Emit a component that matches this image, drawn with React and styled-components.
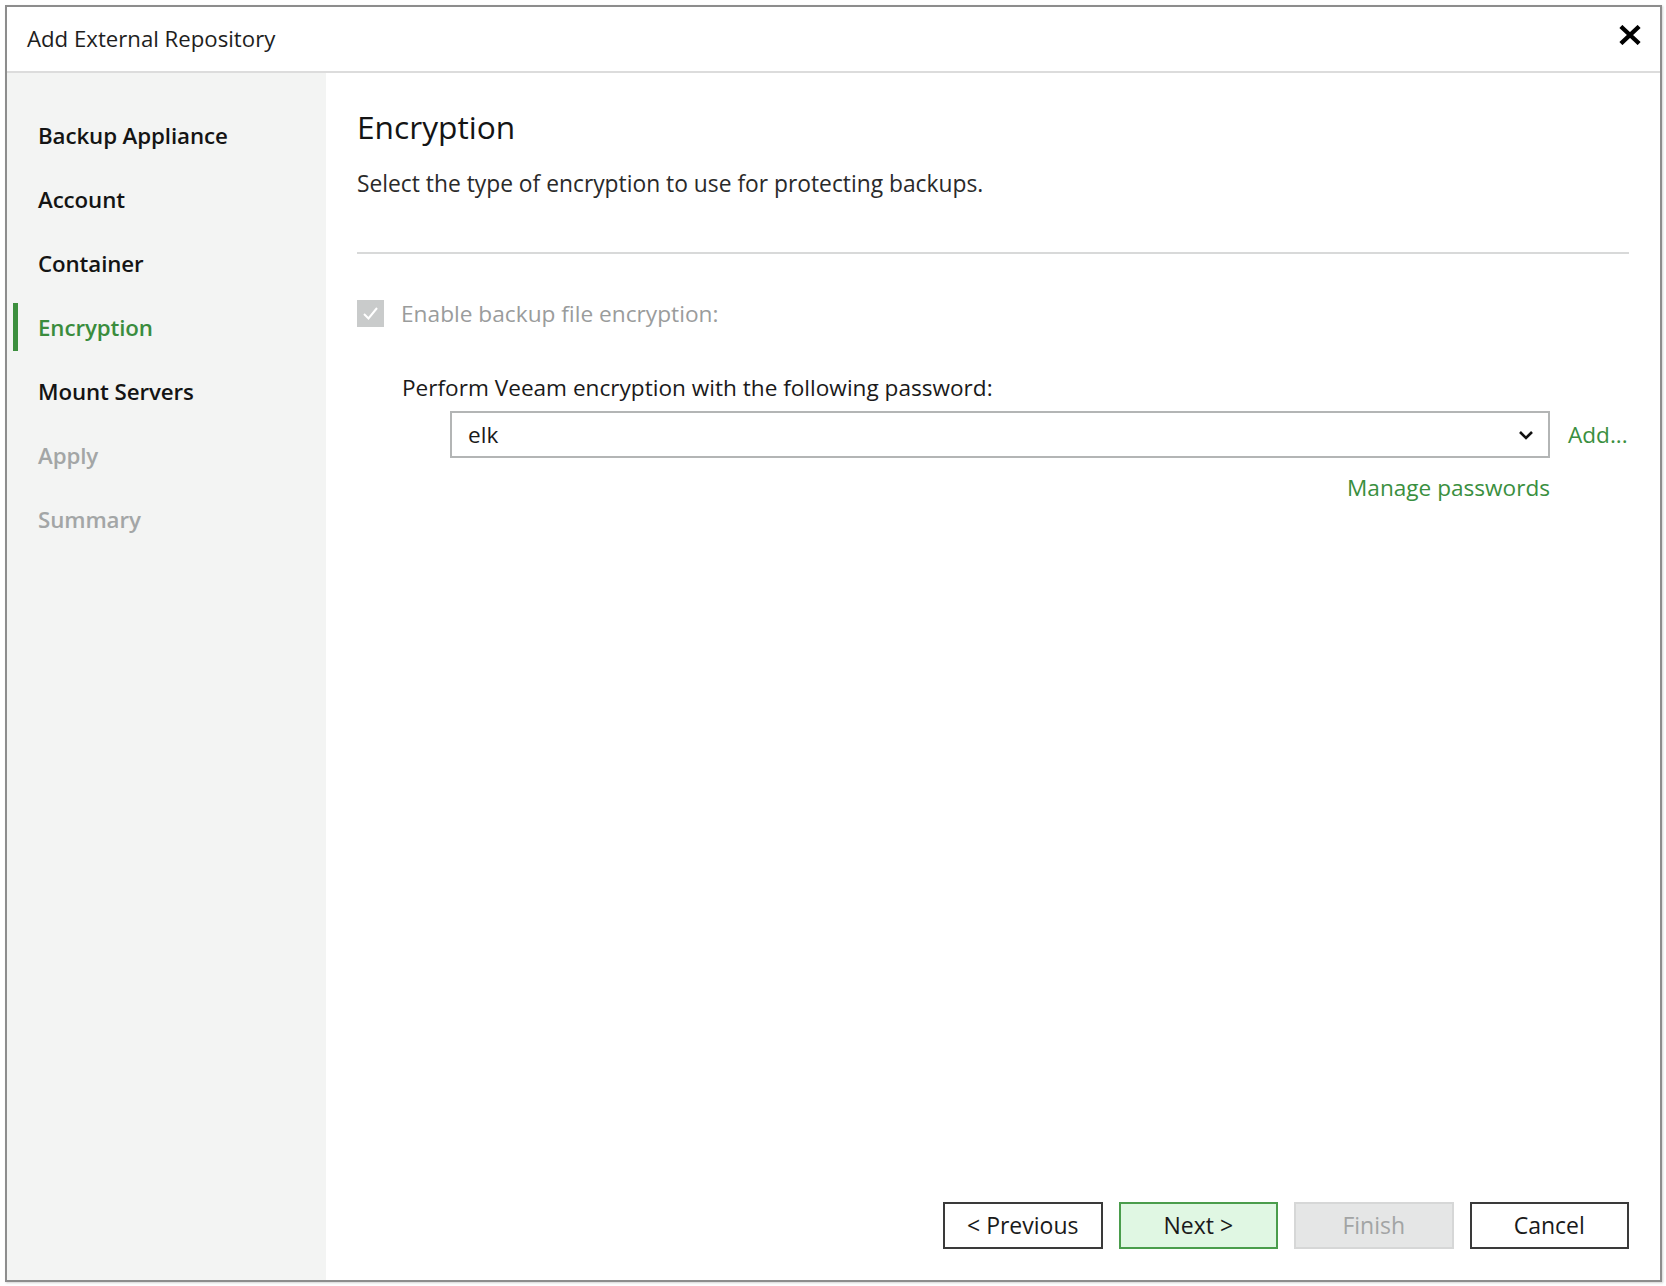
import React from "react";
import styled, { createGlobalStyle } from "styled-components";

const GlobalStyle = createGlobalStyle`
  html, body {
    margin: 0;
    padding: 0;
    background: #ffffff;
  }
  body {
    width: 1666px;
    height: 1286px;
    overflow: hidden;
    font-family: "Open Sans", "Noto Sans", "Liberation Sans", sans-serif;
    color: #1b1b1b;
  }
  * { box-sizing: border-box; }
`;

const Page = styled.div`
  width: 1666px;
  height: 1286px;
  padding: 5px 4px 4px 5px;
`;

const Dialog = styled.div`
  width: 1657px;
  height: 1277px;
  border: 2px solid #8d8d8d;
  box-shadow: 1px 1px 2px rgba(0, 0, 0, 0.18);
  background: #ffffff;
  display: flex;
  flex-direction: column;
`;

const TitleBar = styled.div`
  height: 66px;
  flex: none;
  display: flex;
  align-items: center;
  justify-content: space-between;
  padding: 0 19px 0 20px;
  border-bottom: 2px solid #dcdcdc;
`;

const Title = styled.div`
  font-size: 22.2px;
  color: #1e1e1e;
  padding-bottom: 2px;
`;

const CloseButton = styled.button`
  border: none;
  background: transparent;
  padding: 0;
  width: 23px;
  height: 22px;
  display: flex;
  align-items: center;
  justify-content: center;
  margin-bottom: 8px;
`;

const Body = styled.div`
  flex: 1;
  display: flex;
  min-height: 0;
`;

const Sidebar = styled.nav`
  width: 319px;
  flex: none;
  background: #f3f4f3;
  padding-top: 38px;
  display: flex;
  flex-direction: column;
  gap: 16px;
`;

const NavItem = styled.div`
  height: 48px;
  margin-left: 6px;
  border-left: 5px solid ${(p) => (p.$active ? "#3c8f3e" : "transparent")};
  padding-left: 20px;
  display: flex;
  align-items: center;
  font-size: 22.3px;
  font-weight: 600;
  letter-spacing: -0.1px;
  color: ${(p) =>
    p.$active ? "#3a8c3d" : p.$disabled ? "#a3a6a6" : "#141414"};
`;

const Content = styled.main`
  flex: 1;
  display: flex;
  flex-direction: column;
  padding: 34px 31px 31px 31px;
`;

const Heading = styled.h1`
  margin: 0;
  font-size: 31.7px;
  font-weight: 400;
  line-height: 40px;
  color: #141414;
`;

const Subtitle = styled.p`
  margin: 23px 0 0 0;
  font-size: 22.8px;
  line-height: 28px;
  color: #2a2a2a;
`;

const Divider = styled.hr`
  margin: 54px 0 0 0;
  border: none;
  border-top: 2px solid #d8d9d9;
  height: 0;
`;

const CheckRow = styled.label`
  margin-top: 45px;
  display: flex;
  align-items: center;
  gap: 17px;
  height: 28px;
  font-size: 22.7px;
  color: #9a9c9c;
`;

const CheckBox = styled.span`
  width: 27px;
  height: 27px;
  flex: none;
  background: #c9cbcb;
  display: flex;
  align-items: center;
  justify-content: center;
`;

const Indented = styled.div`
  margin-left: 45px;
  display: flex;
  flex-direction: column;
`;

const FieldLabel = styled.div`
  margin-top: 47px;
  font-size: 22.6px;
  line-height: 28px;
  color: #1a1a1a;
`;

const SelectRow = styled.div`
  margin-top: 9px;
  margin-left: 48px;
  display: flex;
  align-items: center;
  gap: 18px;
`;

const Select = styled.div`
  width: 1100px;
  height: 47px;
  border: 2px solid #b3b5b5;
  display: flex;
  align-items: center;
  justify-content: space-between;
  padding: 0 14px 0 16px;
  font-size: 22.6px;
  color: #1a1a1a;
`;

const Link = styled.a`
  font-size: 22.6px;
  line-height: 28px;
  color: #3a8f40;
  text-decoration: none;
  cursor: pointer;
`;

const LinkRow = styled.div`
  margin-top: 16px;
  width: 1148px;
  display: flex;
  justify-content: flex-end;
`;

const Spacer = styled.div`
  flex: 1;
`;

const Footer = styled.div`
  display: flex;
  justify-content: flex-end;
  gap: 16px;
`;

const variants = {
  default: { bg: "#ffffff", border: "#3a3a3a", color: "#1a1a1a" },
  primary: { bg: "#e0f7e3", border: "#4a9d4c", color: "#1a1a1a" },
  disabled: { bg: "#e5e6e6", border: "#d6d7d7", color: "#a2a4a4" },
};

const Button = styled.button`
  width: 159.5px;
  height: 47px;
  font-family: inherit;
  font-size: 23px;
  background: ${(p) => variants[p.$variant].bg};
  border: 2px solid ${(p) => variants[p.$variant].border};
  color: ${(p) => variants[p.$variant].color};
  padding: 0;
  padding-bottom: 2px;
`;

const navItems = [
  { label: "Backup Appliance" },
  { label: "Account" },
  { label: "Container" },
  { label: "Encryption", active: true },
  { label: "Mount Servers" },
  { label: "Apply", disabled: true },
  { label: "Summary", disabled: true },
];

export default function App() {
  return (
    <>
      <GlobalStyle />
      <Page>
        <Dialog>
          <TitleBar>
            <Title>Add External Repository</Title>
            <CloseButton aria-label="Close">
              <svg width="22" height="20" viewBox="0 0 22 20">
                <path
                  d="M3.5 3 L18.5 17 M18.5 3 L3.5 17"
                  stroke="#000"
                  strokeWidth="4.4"
                  strokeLinecap="square"
                />
              </svg>
            </CloseButton>
          </TitleBar>
          <Body>
            <Sidebar>
              {navItems.map((it) => (
                <NavItem
                  key={it.label}
                  $active={it.active}
                  $disabled={it.disabled}
                >
                  {it.label}
                </NavItem>
              ))}
            </Sidebar>
            <Content>
              <Heading>Encryption</Heading>
              <Subtitle>
                Select the type of encryption to use for protecting backups.
              </Subtitle>
              <Divider />
              <CheckRow>
                <CheckBox>
                  <svg width="17" height="15" viewBox="0 0 17 15">
                    <path
                      d="M2 8 L6.5 12.5 L15 2"
                      fill="none"
                      stroke="#ffffff"
                      strokeWidth="2"
                    />
                  </svg>
                </CheckBox>
                Enable backup file encryption:
              </CheckRow>
              <Indented>
                <FieldLabel>
                  Perform Veeam encryption with the following password:
                </FieldLabel>
                <SelectRow>
                  <Select>
                    <span>elk</span>
                    <svg width="16" height="10" viewBox="0 0 16 10">
                      <path
                        d="M2 2 L8 8 L14 2"
                        fill="none"
                        stroke="#111"
                        strokeWidth="2.6"
                      />
                    </svg>
                  </Select>
                  <Link>Add...</Link>
                </SelectRow>
                <LinkRow>
                  <Link>Manage passwords</Link>
                </LinkRow>
              </Indented>
              <Spacer />
              <Footer>
                <Button $variant="default">&lt; Previous</Button>
                <Button $variant="primary">Next &gt;</Button>
                <Button $variant="disabled" disabled>
                  Finish
                </Button>
                <Button $variant="default">Cancel</Button>
              </Footer>
            </Content>
          </Body>
        </Dialog>
      </Page>
    </>
  );
}
